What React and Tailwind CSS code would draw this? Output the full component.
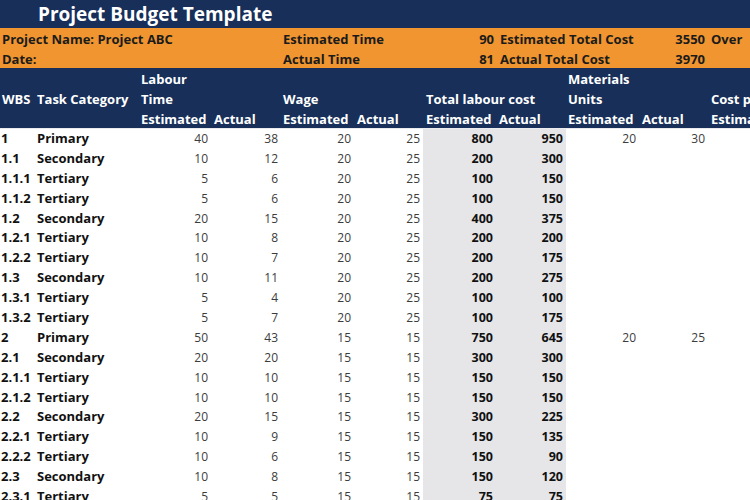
const cols = 'grid grid-cols-[35px_103px_73px_70px_73px_69px_73px_70px_73px_69px_80px]';

const rows = [
  ['1', 'Primary', 40, 38, 20, 25, 800, 950, 20, 30],
  ['1.1', 'Secondary', 10, 12, 20, 25, 200, 300],
  ['1.1.1', 'Tertiary', 5, 6, 20, 25, 100, 150],
  ['1.1.2', 'Tertiary', 5, 6, 20, 25, 100, 150],
  ['1.2', 'Secondary', 20, 15, 20, 25, 400, 375],
  ['1.2.1', 'Tertiary', 10, 8, 20, 25, 200, 200],
  ['1.2.2', 'Tertiary', 10, 7, 20, 25, 200, 175],
  ['1.3', 'Secondary', 10, 11, 20, 25, 200, 275],
  ['1.3.1', 'Tertiary', 5, 4, 20, 25, 100, 100],
  ['1.3.2', 'Tertiary', 5, 7, 20, 25, 100, 175],
  ['2', 'Primary', 50, 43, 15, 15, 750, 645, 20, 25],
  ['2.1', 'Secondary', 20, 20, 15, 15, 300, 300],
  ['2.1.1', 'Tertiary', 10, 10, 15, 15, 150, 150],
  ['2.1.2', 'Tertiary', 10, 10, 15, 15, 150, 150],
  ['2.2', 'Secondary', 20, 15, 15, 15, 300, 225],
  ['2.2.1', 'Tertiary', 10, 9, 15, 15, 150, 135],
  ['2.2.2', 'Tertiary', 10, 6, 15, 15, 150, 90],
  ['2.3', 'Secondary', 10, 8, 15, 15, 150, 120],
  ['2.3.1', 'Tertiary', 5, 5, 15, 15, 75, 75],
];

function Num({ v, bold, grey }) {
  return (
    <div className={`text-right pr-[3px] ${bold ? 'font-bold text-[#111] text-[12.5px]' : 'text-[#3c3c3c]'} ${grey ? 'bg-[#e6e6e8]' : ''}`}>
      {v}
    </div>
  );
}

export default function App() {
  return (
    <div className="w-[750px] h-[500px] overflow-hidden bg-white text-[12px] leading-[20px] font-['Open_Sans',sans-serif] whitespace-nowrap">
      <div className="h-[28px] bg-[#172f59] text-white font-bold text-[19px] leading-[28px] pl-[38px]">
        Project Budget Template
      </div>

      <div className={`${cols} bg-[#f0952f] font-bold text-[13px] leading-[20px] text-[#1b1b1b] pt-[1px] h-[40px]`}>
        <div className="col-span-4 pl-[2px]">Project Name: Project ABC</div>
        <div className="col-span-3 flex justify-between pl-[2px] pr-[2px]">
          <span>Estimated Time</span>
          <span>90</span>
        </div>
        <div className="col-span-3 flex justify-between pl-[4px] pr-[3px]">
          <span>Estimated Total Cost</span>
          <span>3550</span>
        </div>
        <div className="pl-[3px]">Over</div>

        <div className="col-span-4 pl-[2px]">Date:</div>
        <div className="col-span-3 flex justify-between pl-[2px] pr-[2px]">
          <span>Actual Time</span>
          <span>81</span>
        </div>
        <div className="col-span-3 flex justify-between pl-[4px] pr-[3px]">
          <span>Actual Total Cost</span>
          <span>3970</span>
        </div>
        <div></div>
      </div>

      <div className={`${cols} bg-[#172f59] text-white font-bold text-[13px] leading-[20px] pt-[1px] h-[60px] overflow-hidden`}>
        <div></div>
        <div></div>
        <div className="col-span-6 pl-[3px]">Labour</div>
        <div className="col-span-3 pl-[2px]">Materials</div>

        <div className="pl-[2px]">WBS</div>
        <div className="pl-[2px]">Task Category</div>
        <div className="col-span-2 pl-[3px]">Time</div>
        <div className="col-span-2 pl-[2px]">Wage</div>
        <div className="col-span-2 pl-[3px]">Total labour cost</div>
        <div className="col-span-2 pl-[2px]">Units</div>
        <div className="pl-[3px]">Cost per Unit</div>

        <div></div>
        <div></div>
        <div className="pl-[3px]">Estimated</div>
        <div className="pl-[3px]">Actual</div>
        <div className="pl-[2px]">Estimated</div>
        <div className="pl-[3px]">Actual</div>
        <div className="pl-[3px]">Estimated</div>
        <div className="pl-[3px]">Actual</div>
        <div className="pl-[2px]">Estimated</div>
        <div className="pl-[3px]">Actual</div>
        <div className="pl-[3px]">Estimated</div>
      </div>
      <div className="h-[1px] bg-[#e9ebef]"></div>

      {rows.map((r) => (
        <div key={r[0]} className={`${cols} h-[19.9px] leading-[19.9px]`}>
          <div className="pl-[1px] font-bold text-[#111] text-[13px]">{r[0]}</div>
          <div className="pl-[2px] font-bold text-[#111] text-[13px]">{r[1]}</div>
          <Num v={r[2]} />
          <Num v={r[3]} />
          <Num v={r[4]} />
          <Num v={r[5]} />
          <Num v={r[6]} bold grey />
          <Num v={r[7]} bold grey />
          <Num v={r[8]} />
          <Num v={r[9]} />
          <div></div>
        </div>
      ))}
    </div>
  );
}
